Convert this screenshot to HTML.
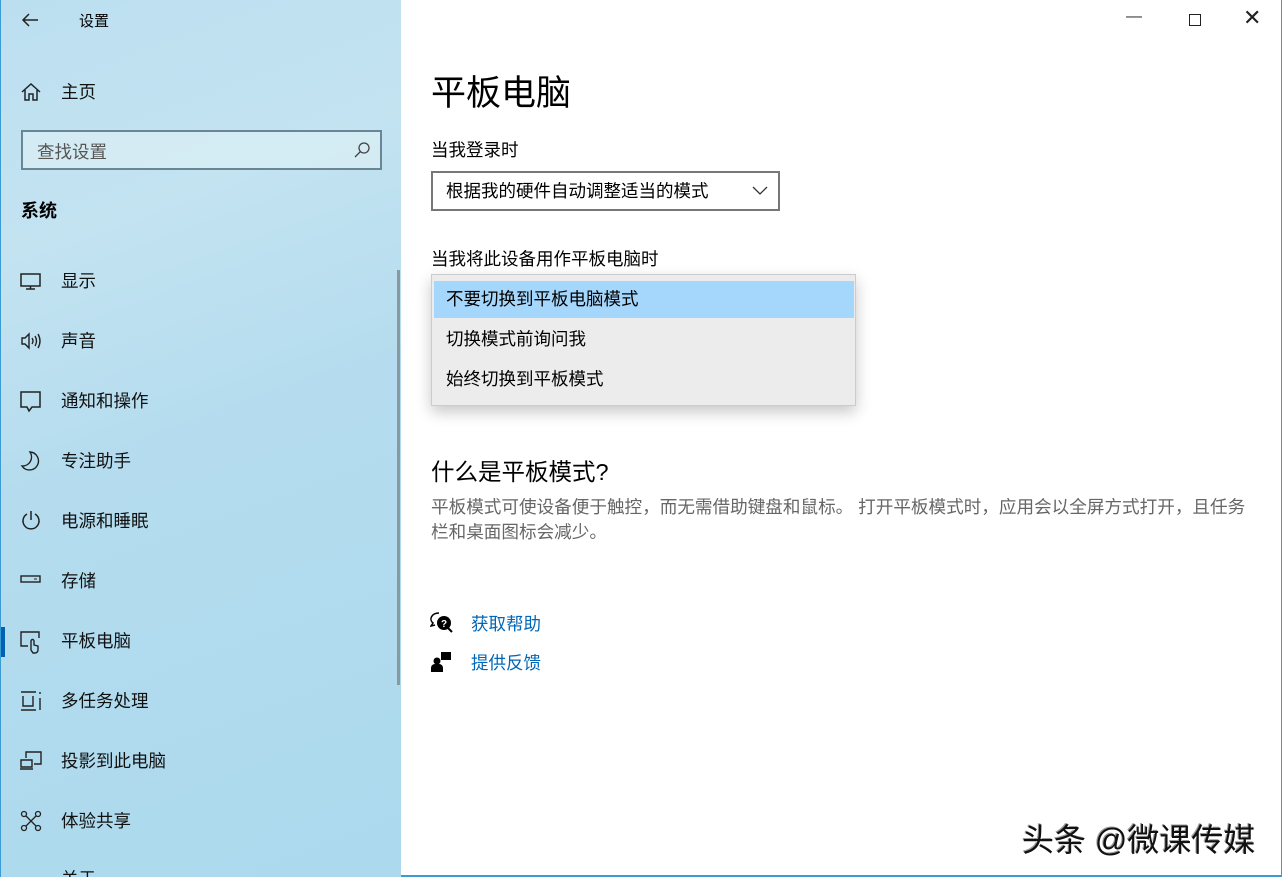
<!DOCTYPE html>
<html><head><meta charset="utf-8"><style>
*{margin:0;padding:0;box-sizing:border-box}
body{width:1282px;height:877px;overflow:hidden;position:relative;font-family:"Liberation Sans","Noto Sans CJK SC",sans-serif;color:#000;background:#fff}
.side{position:absolute;left:0;top:0;width:401px;height:877px;background:linear-gradient(160deg,#bcdff0 0%,#c3e3f1 25%,#b4dcee 50%,#acd9ee 100%);border-left:1px solid #3a9bd5;overflow:hidden}
.t{position:absolute;white-space:nowrap}
.nav{position:absolute;left:60px;font-size:17.5px;color:#111}
.ic{position:absolute;left:19px}
.main{position:absolute;left:401px;top:0;right:0;bottom:0;background:#fff;border-right:1px solid #3a9bd5;border-bottom:2px solid #3a9bd5}
</style></head><body>
<div class="side">
<svg class="ic" style="left:19px;top:11px" width="20" height="18" viewBox="0 0 20 18"><path d="M18 9H3M9 3L3 9l6 6" fill="none" stroke="#222" stroke-width="1.5"/></svg>
<div class="t" style="left:78px;top:10px;font-size:15px">设置</div>
<svg class="ic" style="top:82px" width="22" height="20" viewBox="0 0 22 20"><path d="M2 10L11 2l9 8M5 8v10h4v-6h4v6h4V8" fill="none" stroke="#222" stroke-width="1.5"/></svg>
<div class="nav" style="top:79px">主页</div>
<div style="position:absolute;left:20px;top:130px;width:361px;height:40px;border:2px solid #6a8595;background:rgba(220,240,245,.7)"></div>
<div class="t" style="left:36px;top:139px;font-size:17.5px;color:#555">查找设置</div>
<svg class="ic" style="left:352px;top:141px" width="18" height="18" viewBox="0 0 18 18"><circle cx="11" cy="7" r="5" fill="none" stroke="#444" stroke-width="1.3"/><path d="M7.5 10.5L2 16" stroke="#444" stroke-width="1.3"/></svg>
<div class="t" style="left:20px;top:197px;font-size:18px;font-weight:bold">系统</div>
<svg class="ic" style="top:272px" width="22" height="20" viewBox="0 0 22 20"><rect x="1" y="2" width="19" height="12" fill="none" stroke="#222" stroke-width="1.5"/><path d="M10.5 14v3M6 17h9" stroke="#222" stroke-width="1.5"/></svg>
<div class="nav" style="top:268px">显示</div>
<svg class="ic" style="top:331px" width="24" height="20" viewBox="0 0 24 20"><path d="M2 7h3l4-4v14l-4-4H2z" fill="none" stroke="#222" stroke-width="1.4"/><path d="M12 7q2 3 0 6M15 5q3 5 0 10M18 3q4 7 0 14" fill="none" stroke="#222" stroke-width="1.4"/></svg>
<div class="nav" style="top:328px">声音</div>
<svg class="ic" style="top:390px" width="22" height="24" viewBox="0 0 22 24"><path d="M1 2h19v15h-8l-3 4-2-4H1z" fill="none" stroke="#222" stroke-width="1.5"/></svg>
<div class="nav" style="top:388px">通知和操作</div>
<svg class="ic" style="top:450px" width="22" height="22" viewBox="0 0 22 22"><path d="M10 2a9 9 0 1 1-8 14a9 9 0 0 0 8-14z" fill="none" stroke="#222" stroke-width="1.4"/></svg>
<div class="nav" style="top:448px">专注助手</div>
<svg class="ic" style="top:510px" width="22" height="22" viewBox="0 0 22 22"><path d="M7 4a8 8 0 1 0 8 0M11 1v9" fill="none" stroke="#222" stroke-width="1.5"/></svg>
<div class="nav" style="top:508px">电源和睡眠</div>
<svg class="ic" style="top:573px" width="22" height="14" viewBox="0 0 22 14"><rect x="1" y="3" width="19" height="6" fill="none" stroke="#222" stroke-width="1.4"/><path d="M14 6h3" stroke="#222"/></svg>
<div class="nav" style="top:568px">存储</div>
<div style="position:absolute;left:0;top:627px;width:4px;height:30px;background:#0063b1"></div>
<svg class="ic" style="top:630px" width="24" height="24" viewBox="0 0 24 24"><path d="M8 16H1V2h18v6" fill="none" stroke="#222" stroke-width="1.4"/><path d="M11 20v-9a1.5 1.5 0 0 1 3 0v4l4 1v4a3 3 0 0 1-3 3h-2z" fill="none" stroke="#222" stroke-width="1.4"/></svg>
<div class="nav" style="top:628px">平板电脑</div>
<svg class="ic" style="top:690px" width="24" height="22" viewBox="0 0 24 22"><path d="M1 2h15M1 20h15M3 6v10h10V6M20 2v2M20 8v12" fill="none" stroke="#222" stroke-width="1.4"/></svg>
<div class="nav" style="top:688px">多任务处理</div>
<svg class="ic" style="top:750px" width="24" height="22" viewBox="0 0 24 22"><path d="M6 8V2h15v12h-7M1 10h11v7H1zM0 19h13" fill="none" stroke="#222" stroke-width="1.4"/></svg>
<div class="nav" style="top:748px">投影到此电脑</div>
<svg class="ic" style="top:810px" width="22" height="22" viewBox="0 0 22 22"><circle cx="4" cy="4" r="2.5" fill="none" stroke="#222" stroke-width="1.3"/><circle cx="18" cy="4" r="2.5" fill="none" stroke="#222" stroke-width="1.3"/><circle cx="4" cy="18" r="2.5" fill="none" stroke="#222" stroke-width="1.3"/><circle cx="18" cy="18" r="2.5" fill="none" stroke="#222" stroke-width="1.3"/><path d="M6 6l10 10M16 6L6 16" stroke="#222" stroke-width="1.3"/></svg>
<div class="nav" style="top:808px">体验共享</div>
<div class="nav" style="top:866px">关于</div>
<div style="position:absolute;left:396px;top:270px;width:3px;height:415px;background:#8a98a0"></div>
</div>
<div class="main">
<div class="t" style="left:725px;top:8px;font-size:16px;color:#333">—</div>
<div style="position:absolute;left:788px;top:14px;width:12px;height:12px;border:1.3px solid #222"></div>
<div class="t" style="left:842px;top:5px;font-size:22px;color:#222">✕</div>
<div class="t" style="left:30px;top:65px;font-size:35px">平板电脑</div>
<div class="t" style="left:30px;top:137px;font-size:17.5px">当我登录时</div>
<div style="position:absolute;left:30px;top:171px;width:349px;height:40px;border:2px solid #777"></div>
<div class="t" style="left:45px;top:178px;font-size:17.5px">根据我的硬件自动调整适当的模式</div>
<svg style="position:absolute;left:351px;top:184px" width="16" height="12" viewBox="0 0 16 12"><path d="M1 3l7 7 7-7" fill="none" stroke="#333" stroke-width="1.3"/></svg>
<div class="t" style="left:30px;top:246px;font-size:17.5px">当我将此设备用作平板电脑时</div>
<div style="position:absolute;left:30px;top:274px;width:425px;height:132px;background:#ececec;border:1px solid #ccc;box-shadow:0 6px 14px rgba(0,0,0,.22)"></div>
<div style="position:absolute;left:33px;top:281px;width:420px;height:37px;background:#a5d6fb"></div>
<div class="t" style="left:45px;top:286px;font-size:17.5px">不要切换到平板电脑模式</div>
<div class="t" style="left:45px;top:326px;font-size:17.5px">切换模式前询问我</div>
<div class="t" style="left:45px;top:366px;font-size:17.5px">始终切换到平板模式</div>
<div class="t" style="left:30px;top:453px;font-size:23.5px">什么是平板模式?</div>
<div style="position:absolute;left:30px;top:495px;width:830px;font-size:17.6px;line-height:25px;color:#666">平板模式可使设备便于触控，而无需借助键盘和鼠标。 打开平板模式时，应用会以全屏方式打开，且任务栏和桌面图标会减少。</div>
<svg style="position:absolute;left:29px;top:612px" width="24" height="22" viewBox="0 0 24 22"><path d="M9 1a8 6 0 0 0-6 10l-2 3 4-1" fill="none" stroke="#000" stroke-width="1.5"/><circle cx="14" cy="11" r="7" fill="#000"/><path d="M18 16l4 4" stroke="#000" stroke-width="2"/><text x="11" y="15" font-size="10" fill="#fff" font-weight="bold" font-family="Liberation Sans">?</text></svg>
<div class="t" style="left:70px;top:611px;font-size:17.5px;color:#0067b8">获取帮助</div>
<svg style="position:absolute;left:30px;top:651px" width="22" height="22" viewBox="0 0 22 22"><rect x="10" y="1" width="10" height="8" fill="#000"/><circle cx="6" cy="10" r="3.5" fill="#000"/><path d="M0 21v-4a4 4 0 0 1 4-4h4a4 4 0 0 1 4 4v4z" fill="#000"/></svg>
<div class="t" style="left:70px;top:650px;font-size:17.5px;color:#0067b8">提供反馈</div>
<div class="t" style="left:621px;top:815px;font-size:32px;color:#111;text-shadow:1px 1px 0 #fff,-1px -1px 0 #999">头条 @微课传媒</div>
</div>
</body></html>
